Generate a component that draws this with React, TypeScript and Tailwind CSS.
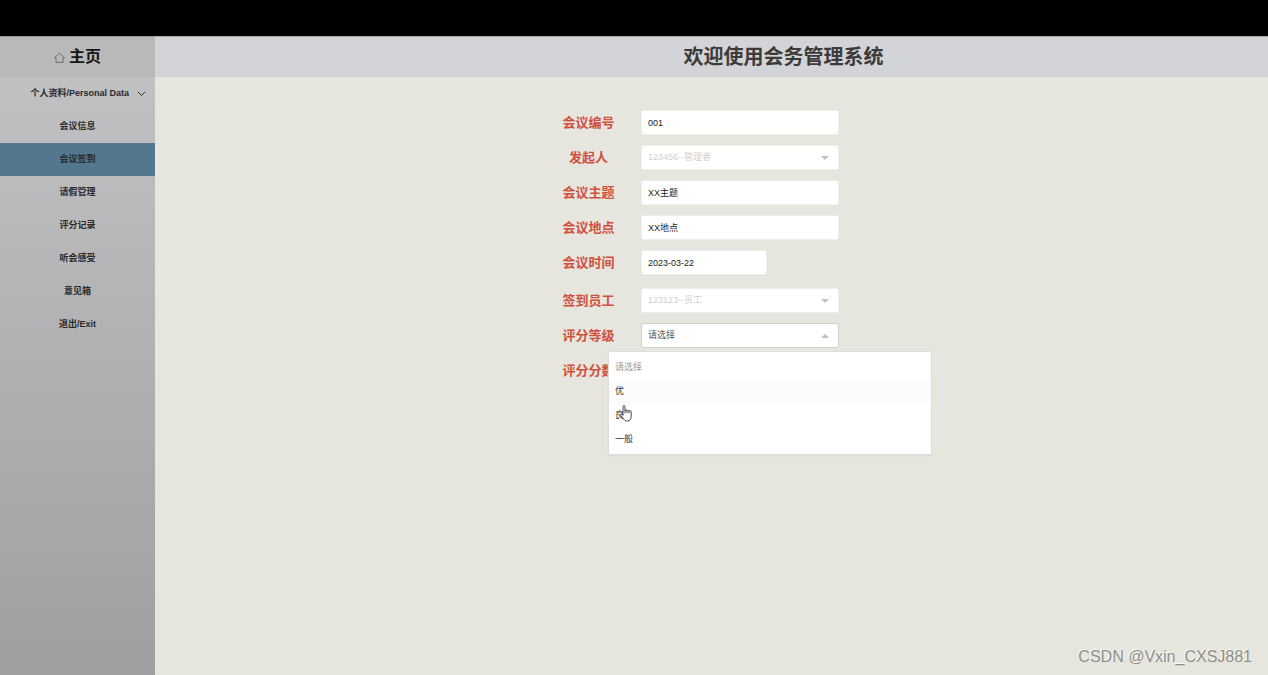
import { useState } from "react";

const MENU = ["会议信息", "会议签到", "请假管理", "评分记录", "听会感受", "意见箱", "退出/Exit"];

const LEVELS = [
  { value: "", label: "请选择" },
  { value: "excellent", label: "优" },
  { value: "good", label: "良" },
  { value: "normal", label: "一般" },
];

export default function App() {
  const [active, setActive] = useState("会议签到");

  return (
    <div className="flex min-h-screen flex-col bg-[#e6e6de] font-['Liberation_Sans','Noto_Sans_CJK_SC',sans-serif]">
      <div className="h-9 shrink-0 bg-black" />
      <div className="flex flex-1">
        <Sidebar active={active} onSelect={setActive} />
        <div className="relative flex min-w-0 flex-1 flex-col">
          <header className="flex h-[41px] items-center justify-center border-t border-[#a9a9a9] bg-[#d2d4d8] pl-36">
            <h1 className="text-[20px] leading-6 font-bold text-[#3d3a38]">欢迎使用会务管理系统</h1>
          </header>
          <main className="flex justify-center pt-[33px] pr-[22px]">
            <MeetingForm />
          </main>
          <div className="absolute right-4 bottom-1 text-[16px] leading-7 text-[#8f8f8b] [text-shadow:-1px_-1px_0_#f8f8f4]">
            CSDN @Vxin_CXSJ881
          </div>
        </div>
      </div>
    </div>
  );
}

function Sidebar({ active, onSelect }: { active: string; onSelect: (v: string) => void }) {
  return (
    <nav className="flex w-[155px] shrink-0 flex-col bg-linear-to-b from-[#c3c3c5] to-[#9f9fa2] text-[9px] font-bold text-[#29292b]">
      <a
        href="#home"
        className="flex h-[41px] items-center justify-center gap-1 border-t border-[#999] bg-[#b9b9b9] text-[16px] text-[#151515]"
      >
        <svg width="11" height="12" viewBox="0 0 11 12" fill="none" stroke="#666" strokeWidth="0.9" aria-hidden="true">
          <path d="M0.6 6.8 5.5 2l4.9 4.8H9V11.4H2V6.8Z" />
        </svg>
        主页
      </a>
      <button className="flex h-[33px] items-center justify-end gap-2 pr-[9px]">
        个人资料/Personal Data
        <svg width="9" height="6" viewBox="0 0 9 6" fill="none" stroke="#333" strokeWidth="1" aria-hidden="true">
          <path d="m0.8 0.8 3.7 3.7 3.7-3.7" />
        </svg>
      </button>
      {MENU.map((item) => (
        <button
          key={item}
          onClick={() => onSelect(item)}
          className={"h-[33px] text-center " + (item === active ? "bg-[#52778f]" : "")}
        >
          {item}
        </button>
      ))}
    </nav>
  );
}

function MeetingForm() {
  const [level, setLevel] = useState("");
  const [open, setOpen] = useState(true);

  return (
    <form className="flex flex-col gap-[10px]">
      <Field id="code" label="会议编号">
        <TextInput id="code" initial="001" />
      </Field>
      <Field id="owner" label="发起人">
        <LockedSelect id="owner" text="123456--管理者" />
      </Field>
      <Field id="topic" label="会议主题">
        <TextInput id="topic" initial="XX主题" />
      </Field>
      <Field id="place" label="会议地点">
        <TextInput id="place" initial="XX地点" />
      </Field>
      <Field id="date" label="会议时间">
        <TextInput id="date" initial="2023-03-22" short />
      </Field>
      <div className="mt-[3px]">
        <Field id="staff" label="签到员工">
          <LockedSelect id="staff" text="123123--员工" />
        </Field>
      </div>
      <Field id="level" label="评分等级">
        <select
          id="level"
          value={level}
          onMouseDown={(e) => {
            e.preventDefault();
            setOpen(!open);
          }}
          onChange={(e) => setLevel(e.target.value)}
          className="block h-[25px] w-full appearance-none rounded-xs border border-[#d0d0ce] bg-white px-[6px] text-[9px] text-[#555]"
        >
          {LEVELS.map((l) => (
            <option key={l.value} value={l.value}>
              {l.label}
            </option>
          ))}
        </select>
        <Caret up={open} />
        {open ? (
          <ul
            role="listbox"
            aria-label="评分等级"
            className="absolute top-7 -left-[33px] z-10 w-[324px] rounded-xs border border-[#dededb] bg-white py-[3px] text-[9px] text-[#333] shadow-xs"
          >
            {LEVELS.map((l) => (
              <li
                key={l.value}
                role="option"
                aria-selected={l.value === level}
                onClick={() => {
                  setLevel(l.value);
                  setOpen(false);
                }}
                className={
                  "h-6 px-[6px] leading-6 " +
                  (l.value === "" ? "text-[#999]" : l.value === "excellent" ? "bg-[#fcfcfc]" : "")
                }
              >
                {l.label}
              </li>
            ))}
            <Pointer />
          </ul>
        ) : null}
      </Field>
      <Field id="score" label="评分分数">
        <TextInput id="score" initial="" />
      </Field>
    </form>
  );
}

function Field({ id, label, children }: { id: string; label: string; children: React.ReactNode }) {
  return (
    <div className="flex h-[25px] items-center gap-[26px]">
      <label htmlFor={id} className="w-[53px] text-center text-[13px] leading-5 font-bold whitespace-nowrap text-[#d0503f]">
        {label}
      </label>
      <div className="relative w-[198px]">{children}</div>
    </div>
  );
}

function TextInput({ id, initial, short }: { id: string; initial: string; short?: boolean }) {
  const [value, setValue] = useState(initial);
  return (
    <input
      id={id}
      value={value}
      onChange={(e) => setValue(e.target.value)}
      className={
        "block h-[25px] rounded-xs border border-[#eeeeea] bg-white px-[6px] text-[9px] text-[#222] outline-none " +
        (short ? "w-[126px]" : "w-full")
      }
    />
  );
}

function LockedSelect({ id, text }: { id: string; text: string }) {
  return (
    <>
      <select
        id={id}
        disabled
        className="block h-[25px] w-full appearance-none rounded-xs border border-[#eeeeea] bg-white px-[6px] text-[9px] text-[#d0d0d0] opacity-100"
      >
        <option>{text}</option>
      </select>
      <Caret />
    </>
  );
}

function Caret({ up }: { up?: boolean }) {
  return (
    <svg
      width="8"
      height="4"
      viewBox="0 0 8 4"
      fill="#c2c2c2"
      aria-hidden="true"
      className="pointer-events-none absolute top-[11px] right-[10px]"
    >
      <path d={up ? "M0 4 4 0l4 4Z" : "M0 0h8L4 4Z"} />
    </svg>
  );
}

// hand cursor resting over the third option
function Pointer() {
  return (
    <svg
      width="12"
      height="17"
      viewBox="0 0 12 17"
      fill="#fff"
      stroke="#333"
      strokeWidth="0.9"
      strokeLinejoin="round"
      aria-hidden="true"
      className="pointer-events-none absolute top-[53px] left-[11px]"
    >
      <path d="M3 10.4V1.6c0-1.5 2-1.5 2 0V5.6c.2-1 1.9-1 2 .2.3-.8 1.9-.7 2 .4.5-.8 2.2-.5 2.2.8v4.2c0 2.8-1.2 4.9-3.8 4.9-2.2 0-3-1-4-2.6L.8 10.6c-.7-1.4.9-2.2 2.2-.2ZM5 5.6v2.6M7 5.8v2.4M9 6.2v2" />
    </svg>
  );
}
